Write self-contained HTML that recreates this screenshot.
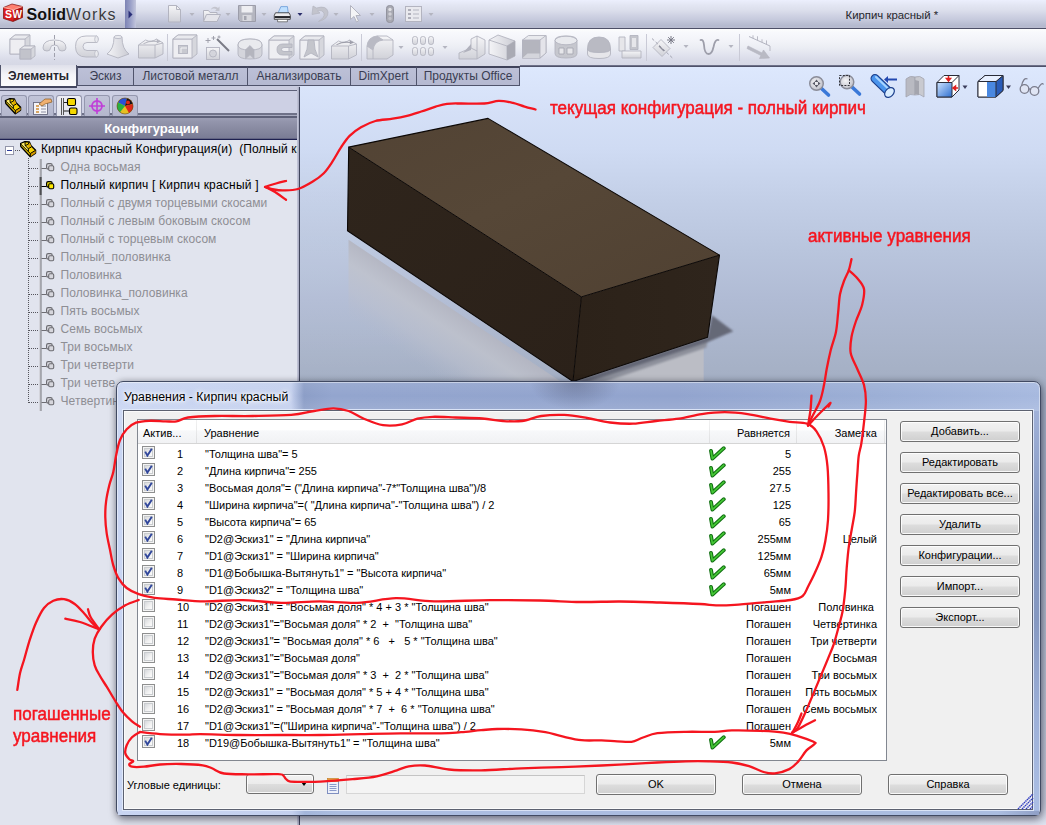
<!DOCTYPE html>
<html lang="ru">
<head>
<meta charset="utf-8">
<title>Уравнения - Кирпич красный</title>
<style>
*{box-sizing:border-box;margin:0;padding:0}
html,body{width:1046px;height:825px;overflow:hidden;background:#dfe2f0}
body{position:relative;font-family:"Liberation Sans",sans-serif;font-size:11px;color:#000}
.abs{position:absolute}
#titlebar{left:0;top:0;width:1046px;height:28px;background:linear-gradient(#eceffd 0,#e3e6f3 18%,#dcdfec 36%,#d0d3e4 54%,#c5c9dc 71%,#b4b9ce 92%,#b9bccf 100%)}
#logo{left:0;top:0;width:125px;height:28px;background:linear-gradient(#eef0fc 0,#e6e8f3 18%,#dfe1ed 36%,#d3d6e5 54%,#c8cbdd 71%,#b7bbcf 92%,#bbbed0 100%)}
#logotab{left:125px;top:0;width:11px;height:28px;background:linear-gradient(90deg,#7d83b4,#9aa0c8 50%,#c3c6dc)}
#tbline{left:0;top:28px;width:1046px;height:1px;background:#4c4f66}
#toolbar{left:0;top:29px;width:1046px;height:37px;background:linear-gradient(#fdfdfd 0,#f7f8fc 11%,#f3f4f9 30%,#eceef4 49%,#e2e4ef 68%,#d9dbe8 84%,#d6d8e5 100%)}
#tabrow{left:0;top:66px;width:1046px;height:21px;background:#c9cbdf}
.tab{position:absolute;top:66px;height:20px;background:linear-gradient(#bcc0d7,#b5b9d1);border:1px solid #50546c;border-top:2px solid #3f425a;font-size:12px;color:#3a3d52;text-align:center;line-height:16px;white-space:nowrap}
.tab.act{top:65px;height:22px;background:linear-gradient(#dfe0ea,#f4f4f8 45%,#fdfdfe);border:none;border-left:1px solid #50546c;border-right:1px solid #50546c;font-weight:bold;color:#26262e;line-height:22px}
#leftpanel{left:0;top:87px;width:297px;height:738px;background:#e1e4ee}
#lpband{left:0;top:87px;width:297px;height:29px;background:linear-gradient(#c8cade 0,#c8cade 2.5px,#5f627a 2.5px,#5f627a 3.5px,#cdd0e4 3.5px,#cdd0e4 26.5px,#6e7188 26.5px,#6e7188 28px,#a8abc0 28px)}
#lpsplit{left:297px;top:87px;width:3px;height:738px;background:linear-gradient(90deg,#c8cadc 0,#a9acc2 1.7px,#3f445c 1.8px)}
.itab{position:absolute;top:95px;width:26px;height:21px;background:linear-gradient(#c1c4d8,#b4b7cd);border:1px solid #9497ae;border-bottom:none;border-radius:3px 3px 0 0}
.itab.act{background:linear-gradient(#eeeef5,#e2e3ed)}
#cfghead{left:0;top:116px;width:297px;height:24px;background:linear-gradient(#5d6078 0,#5d6078 1.5px,#9c9eb4 2px,#9294ab 25%,#86889f 60%,#7a7c95 93%,#1e2050 96%);color:#fff;font-weight:bold;font-size:13px;text-align:center;line-height:25px;padding-left:6px}
#viewport{left:300px;top:87px;width:746px;height:738px;background:#e6e9f5}
.tree{position:absolute;left:60.5px;font-size:12px;letter-spacing:.06px;color:#8e8e94;white-space:nowrap;line-height:18px;height:18px}
.tree.on{color:#000}

.tl{position:absolute;background-image:linear-gradient(#55555c 50%,transparent 50%);background-size:1px 2px;width:1px}
.th{position:absolute;height:1px;background-image:linear-gradient(90deg,#55555c 50%,transparent 50%);background-size:2px 1px}
.ci{position:absolute;left:39px}

#scene{left:300px;top:66px}

#ico{left:0;top:0;pointer-events:none}
#swS{left:26.5px;top:4.5px;font:bold 16px "Liberation Sans",sans-serif;color:#111;letter-spacing:.1px;white-space:nowrap;line-height:20px;text-shadow:0 1px 0 rgba(255,255,255,.6)}
#swS b{font-weight:normal;color:#3a3a3e;letter-spacing:1.1px}

#dlg{left:116px;top:381px;width:925px;height:435px;border-radius:7px 7px 6px 6px;border:1px solid #414a62;background:radial-gradient(ellipse 45px 28px at 458px 0,rgba(40,40,60,.28),rgba(40,40,60,0)),linear-gradient(rgba(255,255,255,.08),rgba(255,255,255,0) 14px,rgba(255,255,255,.1) 28px,rgba(255,255,255,0) 60px),linear-gradient(90deg,#c9d5f2 0,#c4d0ee 174px,#8c9ec7 187px,#93a5ce 215px,#92a4ce 560px,#9cafd6 760px,#a7b9df 100%);box-shadow:0 0 0 1px rgba(255,255,255,.45) inset,1px 4px 9px rgba(0,0,20,.38),0 0 6px rgba(0,0,20,.25)}
#dlgtitle{left:124px;top:390px;font-size:12.3px;color:#000;white-space:nowrap;text-shadow:0 0 6px #fff,0 0 6px #fff,0 0 3px #fff}
#dlgclient{left:123px;top:410px;width:910px;height:400px;background:#f0f0f0;border:1px solid #5c6170;box-shadow:0 0 0 1px rgba(228,236,252,.85),inset 0 0 0 1px rgba(255,255,255,.7)}
#list{left:137px;top:419px;width:750px;height:342px;background:#fff;border:1px solid #828790}
#lhead{left:138px;top:420px;width:748px;height:24px;background:linear-gradient(#fff,#fff 45%,#f7f8fa 46%,#f1f2f4);border-bottom:1px solid #d5d5d5}
.hsep{position:absolute;top:420px;width:1px;height:23px;background:linear-gradient(#f2f2f2,#dedfe1)}
.htx{position:absolute;top:421px;height:23px;line-height:24px;white-space:nowrap;color:#000}
.r{position:absolute;left:138px;width:748px;height:17px;line-height:17px;white-space:pre}
.r span{position:absolute;top:2px}
.r .n{left:39px}
.r .e{left:67px}
.r .v{right:95px;text-align:right}
.r .m{right:9px;text-align:right}
.cb{position:absolute;left:4px;top:2px;width:13px;height:13px;border:1px solid #8e8f8f;background:#f4f4f4}
.cb i{position:absolute;left:1px;top:1px;width:9px;height:9px;border:1px solid #c9cccf;background:linear-gradient(135deg,#d6d8db,#f2f2f2 60%,#fbfbfb)}
.cb svg{position:absolute;left:1px;top:1px}
.ck{position:absolute;left:571px;top:1.6px}
.btn{position:absolute;height:21px;border:1px solid #707070;border-radius:3px;background:linear-gradient(#f2f2f2,#ebebeb 48%,#dddddd 52%,#cfcfcf);box-shadow:inset 0 0 0 1px rgba(255,255,255,.85);text-align:center;line-height:19px;white-space:nowrap;color:#000}

#annot{left:0;top:0;pointer-events:none}
.rt{position:absolute;font:18px "Liberation Sans",sans-serif;color:#f5151f;-webkit-text-stroke:.5px #f5151f;white-space:nowrap;transform-origin:0 0;transform:scaleX(.946);line-height:22px}

</style>
</head>
<body>
<!-- ======= main window chrome ======= -->
<div id="titlebar" class="abs"></div>
<div id="logo" class="abs"></div>
<div id="logotab" class="abs"></div>
<div id="tbline" class="abs"></div>
<div id="toolbar" class="abs"></div>
<div id="tabrow" class="abs"></div>
<svg id="scene" class="abs" width="746" height="759" viewBox="0 0 746 759">
<defs>
<linearGradient id="bgv" x1="0" y1="0" x2="0" y2="1">
<stop offset="0" stop-color="#dde8fd"/><stop offset=".06" stop-color="#d5e0f7"/><stop offset=".11" stop-color="#cfdbf3"/><stop offset=".176" stop-color="#c3cfe7"/><stop offset=".242" stop-color="#b9c5dd"/><stop offset=".308" stop-color="#b0bbd4"/><stop offset=".398" stop-color="#a6b1c6"/><stop offset=".415" stop-color="#a4afc4"/><stop offset=".55" stop-color="#a4afc4"/><stop offset=".97" stop-color="#c4c9da"/><stop offset="1" stop-color="#dfe3f0"/>
</linearGradient>
<radialGradient id="bgh" gradientUnits="userSpaceOnUse" cx="0" cy="0" r="1" gradientTransform="translate(0,205) scale(470,135)">
<stop offset="0" stop-color="#fff" stop-opacity=".06"/><stop offset=".45" stop-color="#fff" stop-opacity=".04"/><stop offset=".8" stop-color="#fff" stop-opacity=".01"/><stop offset="1" stop-color="#fff" stop-opacity="0"/>
</radialGradient>
<linearGradient id="topf" x1="0" y1="0" x2="1" y2="1">
<stop offset="0" stop-color="#524334"/><stop offset=".45" stop-color="#564737"/><stop offset="1" stop-color="#504132"/>
</linearGradient>
<linearGradient id="leftf" x1="0" y1="0" x2="1" y2="1">
<stop offset="0" stop-color="#2f251c"/><stop offset="1" stop-color="#2b2119"/>
</linearGradient>
<linearGradient id="rightf" x1="0" y1="0" x2="1" y2="0">
<stop offset="0" stop-color="#2c2219"/><stop offset="1" stop-color="#2f251c"/>
</linearGradient>
<linearGradient id="refl" x1="0" y1="0" x2="0" y2="1">
<stop offset="0" stop-color="#b4b6c2" stop-opacity=".95"/><stop offset=".3" stop-color="#bfc2cc" stop-opacity=".85"/><stop offset=".65" stop-color="#bcc0cd" stop-opacity=".55"/><stop offset="1" stop-color="#b4bacb" stop-opacity="0"/>
</linearGradient>
<filter id="blur3" x="-20%" y="-20%" width="140%" height="140%"><feGaussianBlur stdDeviation="2.2"/></filter>
<filter id="blur1" x="-20%" y="-20%" width="140%" height="140%"><feGaussianBlur stdDeviation="1"/></filter>
</defs>
<rect width="746" height="759" fill="url(#bgv)"/>
<rect width="746" height="400" fill="url(#bgh)"/>
<g transform="translate(48.5,173.8) skewY(33.75)"><rect width="224.5" height="78" fill="url(#refl)"/></g>
<polygon points="273.0,321.5 403.7,277.5 403.7,334.0 273.0,334.0" fill="#bdbec4" opacity=".92"/>
<polygon points="407.6,271.2 406.5,281.5 274.0,326.0 273.0,315.5" fill="#8d909b" filter="url(#blur1)"/>
<polygon points="412.0,249.3 433.3,265.2 408.0,276.0 360.0,292.0 274.0,320.5 273.0,315.5 407.6,271.2" fill="#626573" opacity=".95" filter="url(#blur1)"/>
<polygon points="48.7,81.1 188.0,52.4 419.5,189.1 281.4,230.9" fill="url(#topf)"/>
<polygon points="48.7,81.1 281.4,230.9 273.0,315.5 47.5,164.8" fill="url(#leftf)"/>
<polygon points="281.4,230.9 419.5,189.1 407.6,271.2 273.0,315.5" fill="url(#rightf)"/>
<polygon points="48.7,81.1 188.0,52.4 419.5,189.1 407.6,271.2 273.0,315.5 47.5,164.8" fill="none" stroke="#0c0806" stroke-width="1.1" stroke-linejoin="round"/>
<polyline points="48.7,81.1 281.4,230.9 419.5,189.1" fill="none" stroke="#0c0806" stroke-width="1"/>
<polyline points="281.4,230.9 273.0,315.5" fill="none" stroke="#0c0806" stroke-width="1"/>
</svg>
<div class="tab act" style="left:0;width:77px">Элементы</div>
<div class="abs" style="left:0;top:86px;width:77px;height:2px;background:#444760;z-index:1"></div>
<div class="abs" style="left:520px;top:65px;width:526px;height:2px;background:linear-gradient(#7d8098,#3f425a)"></div>
<div class="tab" style="left:77px;width:57px">Эскиз</div>
<div class="tab" style="left:133px;width:115px">Листовой металл</div>
<div class="tab" style="left:247px;width:104px">Анализировать</div>
<div class="tab" style="left:350px;width:67px">DimXpert</div>
<div class="tab" style="left:416px;width:104px">Продукты Office</div>
<div class="abs" style="left:845.5px;top:8.5px;font-size:11.4px;color:#26262c;white-space:nowrap">Кирпич красный *</div>

<!-- ======= left panel ======= -->
<div id="leftpanel" class="abs"></div>
<div id="lpband" class="abs"></div>
<div class="itab" style="left:1px"></div>
<div class="itab" style="left:28px"></div>
<div class="itab act" style="left:56px;height:22px"></div>
<div class="itab" style="left:84px"></div>
<div class="itab" style="left:112px"></div>
<div id="cfghead" class="abs">Конфигурации</div>
<div id="lpsplit" class="abs"></div>

<!-- ======= viewport ======= -->

<div class="abs" style="left:5px;top:146px;width:9px;height:9px;border:1px solid #9396aa;background:#fff"></div><div class="abs" style="left:7px;top:150px;width:5px;height:1px;background:#2a3a9a"></div>
<div class="th" style="left:15px;top:150px;width:6px"></div>
<svg class="abs" style="left:20px;top:141px" width="18" height="17" viewBox="0 0 18 17"><path d="M0.4 2.700 L4.900 0.600 L9.400 1 L11.100 4.700 L15.600 9.300 L15.600 12.100 L10.300 15.800 L0.800 5.500 Z" fill="#f6d200" stroke="#000" stroke-width="1.300" stroke-linejoin="round"/><path d="M10.300 12.500 L15.600 9.300 L15.600 12.100 L10.300 15.800Z" fill="#d49a00"/><path d="M8.300 7.600 L11.200 6 L11.100 4.700 L9.400 1 L8.200 3.500Z" fill="#dca800"/><path d="M1 3 L4.900 1.200 L5.200 4.600 L8.200 7.700 L8.300 10.400 Z" fill="#ffee70"/><path d="M0.400 2.700 L10.300 12.500 L15.600 9.300 M10.300 12.500 V15.800 M4.900 0.600 L5.200 4.600 L8.300 7.700 L11.200 6.100 M8.300 7.700 V10.400 M5.200 4.600 L8.200 3.300 L9.400 1" fill="none" stroke="#000" stroke-width="1"/></svg>
<div class="tree on" style="letter-spacing:.1px;left:41px;top:140px;width:256px;overflow:hidden">Кирпич красный Конфигурация(и)&nbsp; (Полный кирпич )</div>
<div class="tl" style="left:28px;top:158px;height:245px"></div>
<div class="th" style="left:29px;top:168px;width:10px"></div>
<svg class="ci" style="top:159px" width="16" height="18" viewBox="0 0 16 18"><path d="M1 0v18" stroke="#c4c4c8" stroke-width="1"/><path d="M2 0v18" stroke="#77777c" stroke-width="1"/><path d="M2.500 9.500h5" stroke="#6c6c72" stroke-width="1"/><rect x="7.600" y="4.600" width="5.600" height="5.600" rx="1.600" fill="#e0e0e6" stroke="#6c6c72" stroke-width="1.200"/><rect x="9.700" y="6.800" width="5" height="5" rx="1.200" fill="#d6d6dc" stroke="#6c6c72" stroke-width="1.100"/></svg>
<div class="tree" style="top:158px">Одна восьмая</div>
<div class="th" style="left:29px;top:186px;width:10px"></div>
<svg class="ci" style="top:177px" width="16" height="18" viewBox="0 0 16 18"><path d="M1 0v18" stroke="#555" stroke-width="1"/><path d="M2 0v18" stroke="#000" stroke-width="1"/><path d="M2.500 9.500h5" stroke="#000" stroke-width="1"/><rect x="7.600" y="4.600" width="5.600" height="5.600" rx="1.600" fill="#e8d800" stroke="#000" stroke-width="1.200"/><rect x="9.700" y="6.800" width="5" height="5" rx="1.200" fill="#ffe800" stroke="#000" stroke-width="1.100"/></svg>
<div class="tree on" style="top:176px;letter-spacing:.2px">Полный кирпич [ Кирпич красный ]</div>
<div class="th" style="left:29px;top:204px;width:10px"></div>
<svg class="ci" style="top:195px" width="16" height="18" viewBox="0 0 16 18"><path d="M1 0v18" stroke="#c4c4c8" stroke-width="1"/><path d="M2 0v18" stroke="#77777c" stroke-width="1"/><path d="M2.500 9.500h5" stroke="#6c6c72" stroke-width="1"/><rect x="7.600" y="4.600" width="5.600" height="5.600" rx="1.600" fill="#e0e0e6" stroke="#6c6c72" stroke-width="1.200"/><rect x="9.700" y="6.800" width="5" height="5" rx="1.200" fill="#d6d6dc" stroke="#6c6c72" stroke-width="1.100"/></svg>
<div class="tree" style="top:194px">Полный с двумя торцевыми скосами</div>
<div class="th" style="left:29px;top:222px;width:10px"></div>
<svg class="ci" style="top:213px" width="16" height="18" viewBox="0 0 16 18"><path d="M1 0v18" stroke="#c4c4c8" stroke-width="1"/><path d="M2 0v18" stroke="#77777c" stroke-width="1"/><path d="M2.500 9.500h5" stroke="#6c6c72" stroke-width="1"/><rect x="7.600" y="4.600" width="5.600" height="5.600" rx="1.600" fill="#e0e0e6" stroke="#6c6c72" stroke-width="1.200"/><rect x="9.700" y="6.800" width="5" height="5" rx="1.200" fill="#d6d6dc" stroke="#6c6c72" stroke-width="1.100"/></svg>
<div class="tree" style="top:212px">Полный с левым боковым скосом</div>
<div class="th" style="left:29px;top:240px;width:10px"></div>
<svg class="ci" style="top:231px" width="16" height="18" viewBox="0 0 16 18"><path d="M1 0v18" stroke="#c4c4c8" stroke-width="1"/><path d="M2 0v18" stroke="#77777c" stroke-width="1"/><path d="M2.500 9.500h5" stroke="#6c6c72" stroke-width="1"/><rect x="7.600" y="4.600" width="5.600" height="5.600" rx="1.600" fill="#e0e0e6" stroke="#6c6c72" stroke-width="1.200"/><rect x="9.700" y="6.800" width="5" height="5" rx="1.200" fill="#d6d6dc" stroke="#6c6c72" stroke-width="1.100"/></svg>
<div class="tree" style="top:230px">Полный с торцевым скосом</div>
<div class="th" style="left:29px;top:258px;width:10px"></div>
<svg class="ci" style="top:249px" width="16" height="18" viewBox="0 0 16 18"><path d="M1 0v18" stroke="#c4c4c8" stroke-width="1"/><path d="M2 0v18" stroke="#77777c" stroke-width="1"/><path d="M2.500 9.500h5" stroke="#6c6c72" stroke-width="1"/><rect x="7.600" y="4.600" width="5.600" height="5.600" rx="1.600" fill="#e0e0e6" stroke="#6c6c72" stroke-width="1.200"/><rect x="9.700" y="6.800" width="5" height="5" rx="1.200" fill="#d6d6dc" stroke="#6c6c72" stroke-width="1.100"/></svg>
<div class="tree" style="top:248px">Полный_половинка</div>
<div class="th" style="left:29px;top:276px;width:10px"></div>
<svg class="ci" style="top:267px" width="16" height="18" viewBox="0 0 16 18"><path d="M1 0v18" stroke="#c4c4c8" stroke-width="1"/><path d="M2 0v18" stroke="#77777c" stroke-width="1"/><path d="M2.500 9.500h5" stroke="#6c6c72" stroke-width="1"/><rect x="7.600" y="4.600" width="5.600" height="5.600" rx="1.600" fill="#e0e0e6" stroke="#6c6c72" stroke-width="1.200"/><rect x="9.700" y="6.800" width="5" height="5" rx="1.200" fill="#d6d6dc" stroke="#6c6c72" stroke-width="1.100"/></svg>
<div class="tree" style="top:266px">Половинка</div>
<div class="th" style="left:29px;top:294px;width:10px"></div>
<svg class="ci" style="top:285px" width="16" height="18" viewBox="0 0 16 18"><path d="M1 0v18" stroke="#c4c4c8" stroke-width="1"/><path d="M2 0v18" stroke="#77777c" stroke-width="1"/><path d="M2.500 9.500h5" stroke="#6c6c72" stroke-width="1"/><rect x="7.600" y="4.600" width="5.600" height="5.600" rx="1.600" fill="#e0e0e6" stroke="#6c6c72" stroke-width="1.200"/><rect x="9.700" y="6.800" width="5" height="5" rx="1.200" fill="#d6d6dc" stroke="#6c6c72" stroke-width="1.100"/></svg>
<div class="tree" style="top:284px">Половинка_половинка</div>
<div class="th" style="left:29px;top:312px;width:10px"></div>
<svg class="ci" style="top:303px" width="16" height="18" viewBox="0 0 16 18"><path d="M1 0v18" stroke="#c4c4c8" stroke-width="1"/><path d="M2 0v18" stroke="#77777c" stroke-width="1"/><path d="M2.500 9.500h5" stroke="#6c6c72" stroke-width="1"/><rect x="7.600" y="4.600" width="5.600" height="5.600" rx="1.600" fill="#e0e0e6" stroke="#6c6c72" stroke-width="1.200"/><rect x="9.700" y="6.800" width="5" height="5" rx="1.200" fill="#d6d6dc" stroke="#6c6c72" stroke-width="1.100"/></svg>
<div class="tree" style="top:302px">Пять восьмых</div>
<div class="th" style="left:29px;top:330px;width:10px"></div>
<svg class="ci" style="top:321px" width="16" height="18" viewBox="0 0 16 18"><path d="M1 0v18" stroke="#c4c4c8" stroke-width="1"/><path d="M2 0v18" stroke="#77777c" stroke-width="1"/><path d="M2.500 9.500h5" stroke="#6c6c72" stroke-width="1"/><rect x="7.600" y="4.600" width="5.600" height="5.600" rx="1.600" fill="#e0e0e6" stroke="#6c6c72" stroke-width="1.200"/><rect x="9.700" y="6.800" width="5" height="5" rx="1.200" fill="#d6d6dc" stroke="#6c6c72" stroke-width="1.100"/></svg>
<div class="tree" style="top:320px">Семь восьмых</div>
<div class="th" style="left:29px;top:348px;width:10px"></div>
<svg class="ci" style="top:339px" width="16" height="18" viewBox="0 0 16 18"><path d="M1 0v18" stroke="#c4c4c8" stroke-width="1"/><path d="M2 0v18" stroke="#77777c" stroke-width="1"/><path d="M2.500 9.500h5" stroke="#6c6c72" stroke-width="1"/><rect x="7.600" y="4.600" width="5.600" height="5.600" rx="1.600" fill="#e0e0e6" stroke="#6c6c72" stroke-width="1.200"/><rect x="9.700" y="6.800" width="5" height="5" rx="1.200" fill="#d6d6dc" stroke="#6c6c72" stroke-width="1.100"/></svg>
<div class="tree" style="top:338px">Три восьмых</div>
<div class="th" style="left:29px;top:366px;width:10px"></div>
<svg class="ci" style="top:357px" width="16" height="18" viewBox="0 0 16 18"><path d="M1 0v18" stroke="#c4c4c8" stroke-width="1"/><path d="M2 0v18" stroke="#77777c" stroke-width="1"/><path d="M2.500 9.500h5" stroke="#6c6c72" stroke-width="1"/><rect x="7.600" y="4.600" width="5.600" height="5.600" rx="1.600" fill="#e0e0e6" stroke="#6c6c72" stroke-width="1.200"/><rect x="9.700" y="6.800" width="5" height="5" rx="1.200" fill="#d6d6dc" stroke="#6c6c72" stroke-width="1.100"/></svg>
<div class="tree" style="top:356px">Три четверти</div>
<div class="th" style="left:29px;top:384px;width:10px"></div>
<svg class="ci" style="top:375px" width="16" height="18" viewBox="0 0 16 18"><path d="M1 0v18" stroke="#c4c4c8" stroke-width="1"/><path d="M2 0v18" stroke="#77777c" stroke-width="1"/><path d="M2.500 9.500h5" stroke="#6c6c72" stroke-width="1"/><rect x="7.600" y="4.600" width="5.600" height="5.600" rx="1.600" fill="#e0e0e6" stroke="#6c6c72" stroke-width="1.200"/><rect x="9.700" y="6.800" width="5" height="5" rx="1.200" fill="#d6d6dc" stroke="#6c6c72" stroke-width="1.100"/></svg>
<div class="tree" style="top:374px">Три четве</div>
<div class="th" style="left:29px;top:402px;width:10px"></div>
<svg class="ci" style="top:393px" width="16" height="18" viewBox="0 0 16 18"><path d="M1 0v18" stroke="#c4c4c8" stroke-width="1"/><path d="M2 0v18" stroke="#77777c" stroke-width="1"/><path d="M2.500 9.500h5" stroke="#6c6c72" stroke-width="1"/><rect x="7.600" y="4.600" width="5.600" height="5.600" rx="1.600" fill="#e0e0e6" stroke="#6c6c72" stroke-width="1.200"/><rect x="9.700" y="6.800" width="5" height="5" rx="1.200" fill="#d6d6dc" stroke="#6c6c72" stroke-width="1.100"/></svg>
<div class="tree" style="top:392px">Четвертинка</div>
<svg id="ico" class="abs" width="1046" height="120" viewBox="0 0 1046 120">
<defs>
<linearGradient id="gcube" x1="0" y1="0" x2="1" y2="1"><stop offset="0" stop-color="#ff6a5a"/><stop offset=".5" stop-color="#e02020"/><stop offset="1" stop-color="#9a0c0c"/></linearGradient>
<linearGradient id="ggrey" x1="0" y1="0" x2="0" y2="1"><stop offset="0" stop-color="#f6f6f8"/><stop offset="1" stop-color="#d0d1d8"/></linearGradient>
<linearGradient id="ggrey2" x1="0" y1="0" x2="1" y2="0"><stop offset="0" stop-color="#f4f4f7"/><stop offset="1" stop-color="#cbccd4"/></linearGradient>
<linearGradient id="gblue" x1="0" y1="0" x2="1" y2="1"><stop offset="0" stop-color="#cfe4ff"/><stop offset="1" stop-color="#2d6fd0"/></linearGradient>
<radialGradient id="glens" cx=".4" cy=".4" r=".7"><stop offset="0" stop-color="#f4f4f6"/><stop offset="1" stop-color="#b9bac4"/></radialGradient>
</defs>
<g><path d="M3.500 7.500 L12 4 L22.500 6.500 L13.500 9.800Z" fill="#ff8070"/><path d="M3.500 7.500 L13.500 9.800 L13 21.500 L3.500 18.500Z" fill="#dc1c1c"/><path d="M13.500 9.800 L22.500 6.500 L22.500 17.500 L13 21.500Z" fill="#b41212"/><path d="M3.500 7.500 L12 4 L22.500 6.500 L22.500 17.500 L13 21.500 L3.500 18.500Z" fill="none" stroke="#7a0c0c" stroke-width=".7"/><path d="M3.500 7.500 L13.500 9.800 L22.500 6.500" fill="none" stroke="#ffc0b0" stroke-width=".8"/></g>
<text x="5" y="18.400" font-family="Liberation Sans, sans-serif" font-weight="bold" font-size="10.500" fill="#fff">S</text><text x="12.600" y="17.800" font-family="Liberation Sans, sans-serif" font-weight="bold" font-size="10.500" fill="#fff" textLength="9.500" lengthAdjust="spacingAndGlyphs">W</text>
<path d="M128.5 10.5 L132.5 14.5 L128.5 18.5 Z" fill="#2a2f78"/>
<path d="M168.5 5.5 h8 l4 4 v12.5 h-12 z" fill="url(#ggrey)" stroke="#b3b4c0"/><path d="M176.5 5.5 v4 h4" fill="none" stroke="#b3b4c0"/>
<path d="M189.5 13h5l-2.5 3z" fill="#b4b5c0"/>
<path d="M203.5 21.5 v-11 h5 l1.5 2 h7 v9 z" fill="url(#ggrey)" stroke="#b3b4c0"/><path d="M203.5 21.5 l3 -7 h14 l-3.5 7 z" fill="#e4e4ea" stroke="#b3b4c0"/><path d="M211 9 q3 -4 7 -1 l1.5 -1.5 v4.5 h-4.5 l1.5 -1.5 q-2.5 -2 -5.500 0z" fill="#c3c4cd"/>
<path d="M225.5 13h5l-2.5 3z" fill="#b4b5c0"/>
<path d="M238.500 5.5 h17 v16 h-15 l-2 -2 z" fill="#b5b6c0" stroke="#9c9daa"/><rect x="241.500" y="6" width="11" height="6.5" fill="#eeeef2"/><rect x="242.500" y="15" width="9" height="6" fill="#d8d8de"/><rect x="244" y="16" width="2.5" height="4" fill="#a4a5b0"/>
<path d="M261.5 13h5l-2.5 3z" fill="#b4b5c0"/>
<g transform="translate(282.500,14) scale(.82) translate(-282.500,-14)"><path d="M277 13 l3.500 -8 h8 l1 8z" fill="#bfe0ff" stroke="#5f93d4" stroke-width=".9"/><path d="M274 12.500 h16.500 l1.500 3 v5 h-19.500 v-5z" fill="#ececee" stroke="#333" stroke-width="1"/><path d="M273 16.500 h19 v2.500 h-19z" fill="#26262a"/><path d="M276.500 20.500 h12 v3 h-12z" fill="#fff" stroke="#444" stroke-width=".8"/></g>
<path d="M297.5 13h5l-2.5 3z" fill="#2a2d6a"/>
<path d="M313 6 l-1 8.500 l8 -1.500 l-2.500 -2 q5 -1.500 6.500 2.500 q1 4 -5.500 8 q10 -2.500 9.500 -9.500 q-1.500 -7 -11.500 -4z" fill="#c3c4cd" stroke="#b3b4c0" stroke-width=".7"/>
<path d="M333.5 13h5l-2.5 3z" fill="#b4b5c0"/>
<path d="M350.500 5.500 v14 l3.500 -3 l2.500 5.500 l2 -1 l-2.500 -5.500 h4.500z" fill="#f4f4f6" stroke="#b3b4c0"/>
<path d="M369.5 13h5l-2.5 3z" fill="#b4b5c0"/>
<rect x="386.500" y="5.500" width="7" height="17" rx="3" fill="#a8a9b2" stroke="#92939e"/><circle cx="390" cy="9.500" r="1.700" fill="#e0e0e4"/><circle cx="390" cy="14" r="1.700" fill="#d0d0d6"/><circle cx="390" cy="18.500" r="1.700" fill="#c0c0c8"/>
<rect x="405.500" y="6.500" width="16" height="15" fill="#e9e9ee" stroke="#b3b4c0"/><path d="M408 10h3M408 14h3M408 18h3" stroke="#9a9ba8" stroke-width="1.600"/><path d="M413 10h6M413 14h6M413 18h6" stroke="#b4b5c0" stroke-width="1"/>
<path d="M428.5 13h5l-2.5 3z" fill="#b4b5c0"/>
<path d="M10 39 l5 -4 h15 v15 l-5 4 h-15 z" fill="#d6d7dd" stroke="#b3b4c0" stroke-width=".9"/><rect x="10" y="39" width="15" height="15" fill="#eeeef2" stroke="#b3b4c0" stroke-width=".9"/><path d="M10 39 l5 -4 h15 l-5 4z" fill="#e9eaee" stroke="#b3b4c0" stroke-width=".9"/>
<path d="M20 49 l4 -3 h11 v10 l-4 3 h-11 z" fill="#d6d7dd" stroke="#b3b4c0" stroke-width=".9"/><rect x="20" y="49" width="11" height="10" fill="#c2c3cb" stroke="#b3b4c0" stroke-width=".9"/><path d="M20 49 l4 -3 h11 l-4 3z" fill="#e9eaee" stroke="#b3b4c0" stroke-width=".9"/>
<path d="M43 48 q0 -8 11.500 -8 q11.500 0 11.500 8 q0 3 -4 3 q-3.500 0 -3.500 -3 q0 -3 -4 -3 q-4 0 -4 3 q0 3 -3.500 3 q-4 0 -4 -3z" fill="url(#ggrey)" stroke="#b3b4c0" stroke-width=".9"/><path d="M54.500 35 v25" stroke="#9fa0ac" stroke-width="1" stroke-dasharray="4 2"/>
<path d="M97 36 h-11 q-10.500 0 -10.500 10.500 q0 10.500 10.500 10.500 h11 q2.500 -3 0 -6.500 h-10 q-4 0 -4 -4 q0 -4 4 -4 h10 q2.500 -3.500 0 -6.500z" fill="url(#ggrey)" stroke="#b3b4c0" stroke-width=".9"/><ellipse cx="96.500" cy="39.300" rx="1.800" ry="3.200" fill="#e9eaee" stroke="#b3b4c0" stroke-width=".7"/><ellipse cx="96.500" cy="53.700" rx="1.800" ry="3.200" fill="#e9eaee" stroke="#b3b4c0" stroke-width=".7"/>
<path d="M114 37 q0 12 -7 17 l11 4 l11 -4 q-7 -5 -7 -17z" fill="url(#ggrey2)" stroke="#b3b4c0" stroke-width=".9"/><ellipse cx="118" cy="37" rx="4" ry="1.600" fill="#e9eaee" stroke="#b3b4c0" stroke-width=".8"/>
<path d="M138.500 45 l7 -5 q6 3 11 -1 l6.500 4 v11 l-8 4 h-16.500z" fill="url(#ggrey)" stroke="#b3b4c0" stroke-width=".9"/><path d="M138.500 45 h16.500 l8 -2 M155 45 v13" fill="none" stroke="#b3b4c0" stroke-width=".9"/><path d="M143 43.500 q7 -4 14 -2.500 l-1 -2 l5 2.500 l-4.500 2 l.5 -1.500 q-7 -1 -13 2z" fill="#b5b6c0"/>
<path d="M167.500 34 v27" stroke="#c9cad6" stroke-width="1"/>
<path d="M173 39 l5 -4 h19 v19 l-5 4 h-19 z" fill="#d6d7dd" stroke="#b3b4c0" stroke-width=".9"/><rect x="173" y="39" width="19" height="19" fill="#eeeef2" stroke="#b3b4c0" stroke-width=".9"/><path d="M173 39 l5 -4 h19 l-5 4z" fill="#e9eaee" stroke="#b3b4c0" stroke-width=".9"/>
<rect x="178.500" y="45.500" width="9" height="8" fill="#c8c9d0" stroke="#b3b4c0" stroke-width=".9"/><path d="M181 53 v-5 h6" fill="none" stroke="#f4f4f6" stroke-width="1"/>
<rect x="206.500" y="47.500" width="13" height="12" fill="url(#ggrey)" stroke="#b3b4c0" stroke-width=".9"/><circle cx="213" cy="53.500" r="3.500" fill="#d4d5dc" stroke="#b3b4c0" stroke-width=".9"/><path d="M217 39 l12 12" stroke="#7a7b86" stroke-width="2"/><path d="M208 38 v5 M205.500 40.500 h5 M213.500 36 v4 M211.500 38 h4 M219 35.500 v3 M217.500 37 h3" stroke="#9a9ba6" stroke-width=".9"/>
<path d="M238 45 q0 -6 12 -6 q12 0 12 6 v9 q0 5 -12 5 q-12 0 -12 -5z" fill="#d4d5dc" stroke="#b3b4c0" stroke-width=".9"/><path d="M238 45 q0 -6 12 -6 q12 0 12 6 q0 5 -12 5 q-12 0 -12 -5z" fill="#e9eaee" stroke="#b3b4c0" stroke-width=".9"/><path d="M250 45.500 l-4.500 4.300 v9 l4.500 -4 l4 4 v-9z" fill="#b4b5be" stroke="#b3b4c0" stroke-width=".7"/>
<path d="M269 40 l5 -4 h20 v19 l-5 4 h-20 z" fill="#d6d7dd" stroke="#b3b4c0" stroke-width=".9"/><rect x="269" y="40" width="20" height="19" fill="#eeeef2" stroke="#b3b4c0" stroke-width=".9"/><path d="M269 40 l5 -4 h20 l-5 4z" fill="#e9eaee" stroke="#b3b4c0" stroke-width=".9"/>
<path d="M292 44 h-9 q-6 0 -6 5.500 q0 5.500 6 5.500 h9 v-3.500 h-8 q-2.500 0 -2.500 -2 q0 -2 2.500 -2 h8z" fill="#c4c5cc" stroke="#b3b4c0" stroke-width=".9"/>
<path d="M300 40 l5 -4 h19 v19 l-5 4 h-19 z" fill="#d6d7dd" stroke="#b3b4c0" stroke-width=".9"/><rect x="300" y="40" width="19" height="19" fill="#eeeef2" stroke="#b3b4c0" stroke-width=".9"/><path d="M300 40 l5 -4 h19 l-5 4z" fill="#e9eaee" stroke="#b3b4c0" stroke-width=".9"/>
<path d="M308 40 q0 10 -4 17 l7 -4 l7 4 q-4 -7 -4 -17z" fill="#c4c5cc" stroke="#b3b4c0" stroke-width=".9"/>
<path d="M331.500 46 l7 -5 q6 3 11 -1 l7 4 v11 l-8 4 h-17z" fill="url(#ggrey)" stroke="#b3b4c0" stroke-width=".9"/><path d="M331.500 46 h17 l8 -2 M348.500 46 v13" fill="none" stroke="#b3b4c0" stroke-width=".9"/><path d="M336 44.500 q7 -4 14 -2.500 l-1 -2 l5 2.500 l-4.500 2 l.5 -1.500 q-7 -1 -13 2z" fill="#9d9eaa"/>
<path d="M361.500 34 v27" stroke="#c9cad6" stroke-width="1"/>
<path d="M367 46 q1 -9 10 -10 h10 l6 4 v15 l-6 4 h-20z" fill="url(#ggrey)" stroke="#b3b4c0" stroke-width=".9"/><path d="M367 46 l6 4 q1 -9 10 -10 l-6 -4 M373 50 v9 M383 40 h10" fill="none" stroke="#b3b4c0" stroke-width=".9"/><path d="M367 46 q1 -9 10 -10 l6 4 q-9 1 -10 10z" fill="#b9bac4"/>
<path d="M398.5 46h5l-2.5 3z" fill="#b4b5c0"/>
<rect x="412.5" y="36.5" width="5" height="8" rx="2.200" fill="url(#ggrey)" stroke="#b3b4c0" stroke-width=".9"/>
<rect x="412.5" y="47.5" width="5" height="8" rx="2.200" fill="url(#ggrey)" stroke="#b3b4c0" stroke-width=".9"/>
<rect x="420.5" y="36.5" width="5" height="8" rx="2.200" fill="url(#ggrey)" stroke="#b3b4c0" stroke-width=".9"/>
<rect x="420.5" y="47.5" width="5" height="8" rx="2.200" fill="url(#ggrey)" stroke="#b3b4c0" stroke-width=".9"/>
<rect x="428.5" y="36.5" width="5" height="8" rx="2.200" fill="url(#ggrey)" stroke="#b3b4c0" stroke-width=".9"/>
<rect x="428.5" y="47.5" width="5" height="8" rx="2.200" fill="url(#ggrey)" stroke="#b3b4c0" stroke-width=".9"/>
<path d="M442.5 46h5l-2.5 3z" fill="#b4b5c0"/>
<path d="M459 59 v-6 l12 -5 v-9 l6 -3 l8 4 v14 l-8 5z" fill="url(#ggrey)" stroke="#b3b4c0" stroke-width=".9"/><path d="M471 48 l6 3 M477 36 v23" fill="none" stroke="#b3b4c0" stroke-width=".9"/><path d="M463 53 l8 -9 v6z" fill="#b0b1bc"/>
<path d="M489 40 l9 -5 l17 6 v15 l-8 4 l-18 -6z" fill="url(#ggrey2)" stroke="#b3b4c0" stroke-width=".9"/><path d="M489 40 l18 6 l8 -5 M507 46 v14" fill="none" stroke="#b3b4c0" stroke-width=".9"/><path d="M507 46 l8 -5 v15 l-8 4z" fill="#a9aab4"/>
<path d="M522.500 40 l6 -4.500 h17.500 v17.500 l-6 5 h-17.500z" fill="#e9eaee" stroke="#b3b4c0" stroke-width=".9"/><rect x="522.500" y="40" width="17.500" height="18" fill="#b4b5be" stroke="#b3b4c0" stroke-width=".9"/><path d="M522.500 58 l5 -4.500 h12.500 v4.500z" fill="#d4d5dc"/><path d="M540 40 l6 -4.500 v17.500 l-6 5z" fill="#e4e4ea" stroke="#b3b4c0" stroke-width=".9"/>
<path d="M555 40.500 q0 -4.500 11 -4.500 q11 0 11 4.500 v13 q0 4.500 -11 4.500 q-11 0 -11 -4.500z" fill="#c6c7ce" stroke="#b3b4c0" stroke-width=".9"/><ellipse cx="566" cy="40.500" rx="11" ry="4.300" fill="#e9eaee" stroke="#b3b4c0" stroke-width=".9"/><path d="M559 48 h5 v6 h-5z M567 48 h6 v6 h-6z" fill="#e6e6ea" stroke="#a2a3ae" stroke-width=".8"/>
<path d="M587.500 49 v5 q0 4.500 11.500 4.500 q11.500 0 11.500 -4.500 v-5z" fill="#e6e6ea" stroke="#b3b4c0" stroke-width=".9"/><path d="M587.500 49 q0 -12 11.500 -12 q11.500 0 11.500 12 q0 3.500 -11.500 3.500 q-11.500 0 -11.500 -3.500z" fill="#b9bac3" stroke="#b3b4c0" stroke-width=".9"/>
<path d="M619 37 h6 v14 h-6z" fill="#e6e6ea" stroke="#b3b4c0" stroke-width=".9"/><path d="M630 35.500 h8 v14 h-8z" fill="#c4c5cc" stroke="#b3b4c0" stroke-width=".9"/><path d="M632 38 h4 v9 h-4z" fill="#e6e6ea"/><path d="M622 51 h19 v7 h-19z" fill="url(#ggrey)" stroke="#b3b4c0" stroke-width=".9"/>
<path d="M646.500 34 v27" stroke="#c9cad6" stroke-width="1"/>
<path d="M653 47.500 l8 -8 l9 9 l-8 8z" fill="url(#ggrey)" stroke="#b3b4c0" stroke-width=".9"/><path d="M652 38.500 l21 20" stroke="#9a9ba8" stroke-width=".9" stroke-dasharray="3 2"/><path d="M659 46 l5 5" stroke="#8e8f9c" stroke-width="1.200"/><path d="M671 36 v8 M667 40 h8 M668.200 37.200 l5.600 5.600 M673.800 37.200 l-5.600 5.600" stroke="#777885" stroke-width="1"/>
<path d="M683.5 45h5l-2.5 3z" fill="#b4b5c0"/>
<path d="M700.500 40 q3 -1 3.500 5 q.5 9 4.500 9 q3.500 0 5 -7 q1.500 -8 5 -7" fill="none" stroke="#9d9eaa" stroke-width="1.800" stroke-linecap="round"/>
<path d="M728.5 45h5l-2.5 3z" fill="#b4b5c0"/>
<path d="M739.500 34 v27" stroke="#c9cad6" stroke-width="1"/>
<path d="M749 36.500 l21 9.500" stroke="#b3b4c0" stroke-width="1"/><path d="M753 38.300 v-3 M757.500 40.300 v-4 M762 42.300 v-3 M766.500 44.400 v-4 M770 46 v5" stroke="#b3b4c0" stroke-width=".9"/><path d="M748 46 l14 7 l1.500 -3 l6 8 l-10 .5 l1.500 -3 l-14 -7z" fill="#b9bac4" stroke="#b3b4c0" stroke-width=".6"/>
<g transform="translate(5,98)"><path d="M0.4 2.700 L4.900 0.600 L9.400 1 L11.100 4.700 L15.600 9.300 L15.600 12.100 L10.300 15.800 L0.800 5.500 Z" fill="#f6d200" stroke="#000" stroke-width="1.300" stroke-linejoin="round"/><path d="M10.300 12.500 L15.600 9.300 L15.600 12.100 L10.300 15.800Z" fill="#d49a00"/><path d="M8.300 7.600 L11.200 6 L11.100 4.700 L9.400 1 L8.200 3.500Z" fill="#dca800"/><path d="M1 3 L4.900 1.200 L5.200 4.600 L8.200 7.700 L8.300 10.400 Z" fill="#ffee70"/><path d="M0.400 2.700 L10.300 12.500 L15.600 9.300 M10.300 12.500 V15.800 M4.900 0.600 L5.200 4.600 L8.300 7.700 L11.200 6.100 M8.300 7.700 V10.400 M5.200 4.600 L8.200 3.300 L9.400 1" fill="none" stroke="#000" stroke-width="1"/></g>
<rect x="33.500" y="102.500" width="14" height="12" fill="#f4f4f8" stroke="#6a6c80" stroke-width=".9"/><path d="M36 106h3M36 109h3M36 112h3" stroke="#d08a30" stroke-width="1.500"/><path d="M41 106h5M41 109h5M41 112h5" stroke="#8a8ca0" stroke-width="1"/><path d="M39 104 l6 -5 h6 l1 3 l-7 2 l-3 2z" fill="#f0b070" stroke="#8a5a20" stroke-width=".7"/>
<path d="M61.500 98 v17 M63.500 98 v17" stroke="#555" stroke-width="1"/><path d="M64 102.500h4M64 111h5" stroke="#222" stroke-width="1"/><rect x="67.500" y="98.500" width="8" height="7" rx="1.500" fill="#f5d800" stroke="#000" stroke-width="1.100"/><rect x="69.500" y="108" width="7.500" height="6.500" rx="1.500" fill="#f5d800" stroke="#000" stroke-width="1.100"/>
<circle cx="97" cy="106" r="5" fill="none" stroke="#c040d8" stroke-width="1.800"/><path d="M97 98v16M89 106h16" stroke="#c040d8" stroke-width="1.600"/>
<circle cx="125" cy="106" r="8" fill="#e8c020"/><path d="M125 106 L118 102.500 A8 8 0 0 1 127 98.200 Z" fill="#2a50d8"/><path d="M125 106 L127 98.200 A8 8 0 0 1 132.800 104 Z" fill="#181018"/><path d="M125 106 L132.800 104 A8 8 0 0 1 129 113 Z" fill="#e02818"/><path d="M125 106 L118 102.500 A8 8 0 0 0 120 112.300 Z" fill="#28b040"/><circle cx="125" cy="106" r="8" fill="none" stroke="#6a4a10" stroke-width=".6"/><circle cx="128" cy="102.500" r="2" fill="#e02818"/>
<path d="M821.500 88.500 l7 6.500" stroke="#3a78d8" stroke-width="3.600" stroke-linecap="round"/><circle cx="816.500" cy="83.500" r="6.800" fill="url(#glens)" stroke="#8a8c98" stroke-width="1.400"/><path d="M816.500 79.500 l2 2.500 h-4z M816.500 87.500 l2 -2.500 h-4z M812.500 83.500 l2.500 -2 v4z M820.500 83.500 l-2.500 -2 v4z" fill="#5a5c68"/>
<path d="M852 87 l7.500 7" stroke="#3a78d8" stroke-width="3.600" stroke-linecap="round"/><circle cx="847" cy="82" r="6.800" fill="url(#glens)" stroke="#8a8c98" stroke-width="1.400"/><rect x="839.500" y="75.500" width="10" height="10" fill="none" stroke="#33343c" stroke-width="1" stroke-dasharray="2 1.300"/>
<path d="M875 78.500 l13 12.500" stroke="#1c3f8c" stroke-width="9" stroke-linecap="round"/><path d="M875 78.500 l13 12.500" stroke="#4a94ec" stroke-width="6.600" stroke-linecap="round"/><path d="M876 77 l12 11.500" stroke="#a8d4ff" stroke-width="2" stroke-linecap="round"/><ellipse cx="889.500" cy="92.500" rx="5.600" ry="4" transform="rotate(-45 889.500 92.500)" fill="#d8ecff" stroke="#1c3f8c" stroke-width="1.200"/><path d="M897 78.500 h-9 v-2.500 l-4 3.500 l4 3.500 v-2.500 h9z" fill="#2348b0"/>
<path d="M906 79 q4 -4 9 -2 v18 q-5 -2 -9 2z" fill="#b9bac2" stroke="#a2a3ae" stroke-width=".8"/><path d="M915 77 q5 -2 9 2 v18 q-4 -4 -9 -2z" fill="#c9cad0" stroke="#a2a3ae" stroke-width=".8"/><path d="M915 80 l4 1 v14 l-4 -1z" fill="#a4a5ae"/>
<path d="M937 82.500 l7 -7 h15 v14.500 l-7 7 h-15z" fill="#fff" stroke="#2a2c38" stroke-width="1"/><path d="M937 82.500 h15 v14.500 h-15z" fill="url(#gblue)" stroke="#2a2c38" stroke-width="1"/><path d="M952 82.500 l7 -7" stroke="#2a2c38" stroke-width="1"/><path d="M948.500 76 v4.500 M946.500 78.500 l2 2.500 l2 -2.500z" stroke="#e02020" stroke-width="1.500" fill="#e02020"/><path d="M958 88 h-4 M955.500 86 l-2.500 2 l2.500 2z" stroke="#e02020" stroke-width="1.500" fill="#e02020"/>
<path d="M962.500 85.500 h5 l-2.500 3.500z" fill="#3a3c5a"/>
<path d="M978 81.500 l7 -6 h18 v15 l-7 6.500 h-18z" fill="#fff" stroke="#2a2c38" stroke-width="1"/><path d="M978 81.500 h18 v15.500 h-18z" fill="#fff" stroke="#2a2c38" stroke-width="1"/><path d="M987 81.500 h9 v15.500 h-9z" fill="#4a88e0"/><path d="M996 81.500 l7 -6 v15 l-7 6.500z" fill="#2a5cb8" stroke="#2a2c38" stroke-width="1"/><path d="M978 81.500 l7 -6 h18 l-7 6z" fill="#e8f0ff" stroke="#2a2c38" stroke-width="1"/>
<path d="M1006 85.500 h5 l-2.500 3.500z" fill="#3a3c5a"/>
<circle cx="1024.500" cy="89" r="4.300" fill="#e4e6f0" fill-opacity=".6" stroke="#7a7c8c" stroke-width="1.300"/><circle cx="1034.500" cy="91" r="4.300" fill="#e4e6f0" fill-opacity=".6" stroke="#7a7c8c" stroke-width="1.300"/><path d="M1021.500 86 q2 -9 6 -7 M1038 88.500 q4 -7 5.500 -4 M1028.500 89.500 q1.500 -1.500 2.500 .3" fill="none" stroke="#7a7c8c" stroke-width="1.200"/>
</svg>
<div id="swS" class="abs">Solid<b>Works</b></div>
<div id="dlg" class="abs"></div>
<div class="abs" style="left:1034px;top:411px;width:5px;height:399px;background:linear-gradient(#a0b1d8 0,#8497c0 27%,#8598c1 52%,#9db0d8 77%,#aabde3 97%)"></div>
<div class="abs" style="left:118px;top:811px;width:921px;height:4px;background:linear-gradient(90deg,#c9d5f2 0,#c4d0ee 174px,#a4b6da 187px,#abbde0 220px,#abbde0 880px,#8f9fc6 100%)"></div>
<div id="dlgtitle" class="abs">Уравнения - Кирпич красный</div>
<div id="dlgclient" class="abs"></div>
<div id="list" class="abs"></div>
<div id="lhead" class="abs"></div>
<div class="hsep" style="left:196px"></div>
<div class="hsep" style="left:709px"></div>
<div class="hsep" style="left:796px"></div>
<div class="hsep" style="left:884px"></div>
<div class="htx" style="left:143px">Актив...</div>
<div class="htx" style="left:204px">Уравнение</div>
<div class="htx" style="right:256px">Равняется</div>
<div class="htx" style="right:169px">Заметка</div>
<div class="r" style="top:444px"><div class="cb"><i></i><svg width="9" height="9" viewBox="0 0 9 9"><path d="M1.2 3.6 L3.4 7.6 L7.8 0.8" fill="none" stroke="#31479b" stroke-width="1.9"/></svg></div><span class="n">1</span><span class="e">&quot;Толщина шва&quot;= 5</span><svg class="ck" width="17" height="16" viewBox="0 0 17 16"><path d="M2 4.800 L3.400 12.600 L14.800 2.200" fill="none" stroke="#0f6e10" stroke-width="3.800" stroke-linejoin="round" stroke-linecap="round"/><path d="M2 4.800 L3.400 12.600 L14.800 2.200" fill="none" stroke="#46c836" stroke-width="1.700" stroke-linejoin="round" stroke-linecap="round"/></svg><span class="v">5</span></div>
<div class="r" style="top:461px"><div class="cb"><i></i><svg width="9" height="9" viewBox="0 0 9 9"><path d="M1.2 3.6 L3.4 7.6 L7.8 0.8" fill="none" stroke="#31479b" stroke-width="1.9"/></svg></div><span class="n">2</span><span class="e">&quot;Длина кирпича&quot;= 255</span><svg class="ck" width="17" height="16" viewBox="0 0 17 16"><path d="M2 4.800 L3.400 12.600 L14.800 2.200" fill="none" stroke="#0f6e10" stroke-width="3.800" stroke-linejoin="round" stroke-linecap="round"/><path d="M2 4.800 L3.400 12.600 L14.800 2.200" fill="none" stroke="#46c836" stroke-width="1.700" stroke-linejoin="round" stroke-linecap="round"/></svg><span class="v">255</span></div>
<div class="r" style="top:478px"><div class="cb"><i></i><svg width="9" height="9" viewBox="0 0 9 9"><path d="M1.2 3.6 L3.4 7.6 L7.8 0.8" fill="none" stroke="#31479b" stroke-width="1.9"/></svg></div><span class="n">3</span><span class="e">&quot;Восьмая доля&quot;= (&quot;Длина кирпича&quot;-7*&quot;Толщина шва&quot;)/8</span><svg class="ck" width="17" height="16" viewBox="0 0 17 16"><path d="M2 4.800 L3.400 12.600 L14.800 2.200" fill="none" stroke="#0f6e10" stroke-width="3.800" stroke-linejoin="round" stroke-linecap="round"/><path d="M2 4.800 L3.400 12.600 L14.800 2.200" fill="none" stroke="#46c836" stroke-width="1.700" stroke-linejoin="round" stroke-linecap="round"/></svg><span class="v">27.5</span></div>
<div class="r" style="top:495px"><div class="cb"><i></i><svg width="9" height="9" viewBox="0 0 9 9"><path d="M1.2 3.6 L3.4 7.6 L7.8 0.8" fill="none" stroke="#31479b" stroke-width="1.9"/></svg></div><span class="n">4</span><span class="e">&quot;Ширина кирпича&quot;=( &quot;Длина кирпича&quot;-&quot;Толщина шва&quot;) / 2</span><svg class="ck" width="17" height="16" viewBox="0 0 17 16"><path d="M2 4.800 L3.400 12.600 L14.800 2.200" fill="none" stroke="#0f6e10" stroke-width="3.800" stroke-linejoin="round" stroke-linecap="round"/><path d="M2 4.800 L3.400 12.600 L14.800 2.200" fill="none" stroke="#46c836" stroke-width="1.700" stroke-linejoin="round" stroke-linecap="round"/></svg><span class="v">125</span></div>
<div class="r" style="top:512px"><div class="cb"><i></i><svg width="9" height="9" viewBox="0 0 9 9"><path d="M1.2 3.6 L3.4 7.6 L7.8 0.8" fill="none" stroke="#31479b" stroke-width="1.9"/></svg></div><span class="n">5</span><span class="e">&quot;Высота кирпича&quot;= 65</span><svg class="ck" width="17" height="16" viewBox="0 0 17 16"><path d="M2 4.800 L3.400 12.600 L14.800 2.200" fill="none" stroke="#0f6e10" stroke-width="3.800" stroke-linejoin="round" stroke-linecap="round"/><path d="M2 4.800 L3.400 12.600 L14.800 2.200" fill="none" stroke="#46c836" stroke-width="1.700" stroke-linejoin="round" stroke-linecap="round"/></svg><span class="v">65</span></div>
<div class="r" style="top:529px"><div class="cb"><i></i><svg width="9" height="9" viewBox="0 0 9 9"><path d="M1.2 3.6 L3.4 7.6 L7.8 0.8" fill="none" stroke="#31479b" stroke-width="1.9"/></svg></div><span class="n">6</span><span class="e">&quot;D2@Эскиз1&quot; = &quot;Длина кирпича&quot;</span><svg class="ck" width="17" height="16" viewBox="0 0 17 16"><path d="M2 4.800 L3.400 12.600 L14.800 2.200" fill="none" stroke="#0f6e10" stroke-width="3.800" stroke-linejoin="round" stroke-linecap="round"/><path d="M2 4.800 L3.400 12.600 L14.800 2.200" fill="none" stroke="#46c836" stroke-width="1.700" stroke-linejoin="round" stroke-linecap="round"/></svg><span class="v">255мм</span><span class="m">Целый</span></div>
<div class="r" style="top:546px"><div class="cb"><i></i><svg width="9" height="9" viewBox="0 0 9 9"><path d="M1.2 3.6 L3.4 7.6 L7.8 0.8" fill="none" stroke="#31479b" stroke-width="1.9"/></svg></div><span class="n">7</span><span class="e">&quot;D1@Эскиз1&quot; = &quot;Ширина кирпича&quot;</span><svg class="ck" width="17" height="16" viewBox="0 0 17 16"><path d="M2 4.800 L3.400 12.600 L14.800 2.200" fill="none" stroke="#0f6e10" stroke-width="3.800" stroke-linejoin="round" stroke-linecap="round"/><path d="M2 4.800 L3.400 12.600 L14.800 2.200" fill="none" stroke="#46c836" stroke-width="1.700" stroke-linejoin="round" stroke-linecap="round"/></svg><span class="v">125мм</span></div>
<div class="r" style="top:563px"><div class="cb"><i></i><svg width="9" height="9" viewBox="0 0 9 9"><path d="M1.2 3.6 L3.4 7.6 L7.8 0.8" fill="none" stroke="#31479b" stroke-width="1.9"/></svg></div><span class="n">8</span><span class="e">&quot;D1@Бобышка-Вытянуть1&quot; = &quot;Высота кирпича&quot;</span><svg class="ck" width="17" height="16" viewBox="0 0 17 16"><path d="M2 4.800 L3.400 12.600 L14.800 2.200" fill="none" stroke="#0f6e10" stroke-width="3.800" stroke-linejoin="round" stroke-linecap="round"/><path d="M2 4.800 L3.400 12.600 L14.800 2.200" fill="none" stroke="#46c836" stroke-width="1.700" stroke-linejoin="round" stroke-linecap="round"/></svg><span class="v">65мм</span></div>
<div class="r" style="top:580px"><div class="cb"><i></i><svg width="9" height="9" viewBox="0 0 9 9"><path d="M1.2 3.6 L3.4 7.6 L7.8 0.8" fill="none" stroke="#31479b" stroke-width="1.9"/></svg></div><span class="n">9</span><span class="e">&quot;D1@Эскиз2&quot; = &quot;Толщина шва&quot;</span><svg class="ck" width="17" height="16" viewBox="0 0 17 16"><path d="M2 4.800 L3.400 12.600 L14.800 2.200" fill="none" stroke="#0f6e10" stroke-width="3.800" stroke-linejoin="round" stroke-linecap="round"/><path d="M2 4.800 L3.400 12.600 L14.800 2.200" fill="none" stroke="#46c836" stroke-width="1.700" stroke-linejoin="round" stroke-linecap="round"/></svg><span class="v">5мм</span></div>
<div class="r" style="top:597px"><div class="cb"><i></i></div><span class="n">10</span><span class="e">&quot;D2@Эскиз1&quot; = &quot;Восьмая доля&quot; * 4 + 3 * &quot;Толщина шва&quot;</span><span class="v">Погашен</span><span class="m">Половинка </span></div>
<div class="r" style="top:614px"><div class="cb"><i></i></div><span class="n">11</span><span class="e">&quot;D2@Эскиз1&quot;=&quot;Восьмая доля&quot; * 2  +  &quot;Толщина шва&quot;</span><span class="v">Погашен</span><span class="m">Четвертинка</span></div>
<div class="r" style="top:631px"><div class="cb"><i></i></div><span class="n">12</span><span class="e">&quot;D2@Эскиз1&quot;= &quot;Восьмая доля&quot; * 6   +   5 * &quot;Толщина шва&quot;</span><span class="v">Погашен</span><span class="m">Три четверти</span></div>
<div class="r" style="top:648px"><div class="cb"><i></i></div><span class="n">13</span><span class="e">&quot;D2@Эскиз1&quot;=&quot;Восьмая доля&quot;</span><span class="v">Погашен</span><span class="m">Восьмая</span></div>
<div class="r" style="top:665px"><div class="cb"><i></i></div><span class="n">14</span><span class="e">&quot;D2@Эскиз1&quot;=&quot;Восьмая доля&quot; * 3  +  2 * &quot;Толщина шва&quot;</span><span class="v">Погашен</span><span class="m">Три восьмых</span></div>
<div class="r" style="top:682px"><div class="cb"><i></i></div><span class="n">15</span><span class="e">&quot;D2@Эскиз1&quot; = &quot;Восьмая доля&quot; * 5 + 4 * &quot;Толщина шва&quot;</span><span class="v">Погашен</span><span class="m">Пять восьмых</span></div>
<div class="r" style="top:699px"><div class="cb"><i></i></div><span class="n">16</span><span class="e">&quot;D2@Эскиз1&quot; = &quot;Восьмая доля&quot; * 7  +  6 * &quot;Толщина шва&quot;</span><span class="v">Погашен</span><span class="m">Семь восьмых</span></div>
<div class="r" style="top:716px"><div class="cb"><i></i></div><span class="n">17</span><span class="e">&quot;D1@Эскиз1&quot;=(&quot;Ширина кирпича&quot;-&quot;Толщина шва&quot;) / 2</span><span class="v">Погашен</span></div>
<div class="r" style="top:733px"><div class="cb"><i></i><svg width="9" height="9" viewBox="0 0 9 9"><path d="M1.2 3.6 L3.4 7.6 L7.8 0.8" fill="none" stroke="#31479b" stroke-width="1.9"/></svg></div><span class="n">18</span><span class="e">&quot;D19@Бобышка-Вытянуть1&quot; = &quot;Толщина шва&quot;</span><svg class="ck" width="17" height="16" viewBox="0 0 17 16"><path d="M2 4.800 L3.400 12.600 L14.800 2.200" fill="none" stroke="#0f6e10" stroke-width="3.800" stroke-linejoin="round" stroke-linecap="round"/><path d="M2 4.800 L3.400 12.600 L14.800 2.200" fill="none" stroke="#46c836" stroke-width="1.700" stroke-linejoin="round" stroke-linecap="round"/></svg><span class="v">5мм</span></div>
<div class="btn" style="left:900px;top:421px;width:120px">Добавить...</div>
<div class="btn" style="left:900px;top:452px;width:120px">Редактировать</div>
<div class="btn" style="left:900px;top:483px;width:120px">Редактировать все...</div>
<div class="btn" style="left:900px;top:514px;width:120px">Удалить</div>
<div class="btn" style="left:900px;top:545px;width:120px">Конфигурации...</div>
<div class="btn" style="left:900px;top:576px;width:120px">Импорт...</div>
<div class="btn" style="left:900px;top:607px;width:120px">Экспорт...</div>
<div class="btn" style="left:596px;top:774px;width:120px">OK</div>
<div class="btn" style="left:742px;top:774px;width:120px">Отмена</div>
<div class="btn" style="left:888px;top:774px;width:120px">Справка</div>
<div class="abs" style="left:127px;top:779px;white-space:nowrap">Угловые единицы:</div>
<div class="btn" style="left:246px;top:774px;width:68px;height:20px"></div>
<div class="abs" style="left:301px;top:782px;width:0;height:0;border:3.5px solid transparent;border-top:4px solid #000;border-bottom:none"></div>
<div class="abs" style="left:346px;top:775px;width:239px;height:19px;background:#f4f4f4;border:1px solid #d6d6d6;border-top-color:#c4c4c4"></div>
<svg class="abs" style="left:326px;top:777px" width="14" height="17" viewBox="0 0 14 17"><rect x="1.5" y="3.5" width="11" height="13" fill="#eef1fa" stroke="#7f8fc0"/><rect x="1.5" y="1.5" width="11" height="3" fill="#e8a23a" stroke="#c07820" stroke-width=".6"/><path d="M3.5 7.5h7M3.5 9.5h7M3.5 11.5h7M3.5 13.5h7" stroke="#8a9acb" stroke-width="1"/></svg>
<svg class="abs" style="left:1017px;top:793px" width="17" height="17" viewBox="0 0 17 17"><path d="M1 16L16 1M5 16L16 5M9 16L16 9M13 16L16 13" stroke="#2f3cc0" stroke-width="1.5" stroke-dasharray="1.5 0.6"/></svg>
<svg id="annot" class="abs" width="1046" height="825" viewBox="0 0 1046 825" fill="none" stroke="#f5151f" stroke-width="2.3" stroke-linecap="round" stroke-linejoin="round">
<path d="M265.0 187.0C266.5 187.4 270.9 188.9 274.0 189.5C277.1 190.1 279.7 190.5 283.7 190.4C287.7 190.3 293.2 190.4 298.0 189.0C302.8 187.6 308.1 184.4 312.4 181.8C316.7 179.2 320.5 176.5 323.8 173.2C327.1 169.8 329.5 166.0 332.4 161.7C335.3 157.4 338.1 151.7 341.0 147.4C343.9 143.1 346.3 139.2 349.6 135.9C352.9 132.6 356.7 129.8 361.0 127.3C365.3 124.8 370.1 122.4 375.4 121.0C380.7 119.6 387.4 119.6 392.7 118.7C398.0 117.8 402.2 117.0 407.0 115.8C411.8 114.6 416.5 113.0 421.3 111.5C426.1 110.0 431.4 107.9 435.7 106.6C440.0 105.3 442.7 104.3 447.0 103.8C451.3 103.3 455.3 103.5 461.5 103.5C467.7 103.5 478.2 103.9 484.4 103.5C490.6 103.1 494.0 101.0 498.8 100.9C503.6 100.8 508.7 102.0 513.0 102.9C517.3 103.9 520.9 105.5 524.6 106.6C528.4 107.7 533.7 109.0 535.5 109.5"/>
<path d="M286.0 181.0C284.3 181.4 279.4 182.5 276.0 183.5C272.6 184.5 267.2 186.2 265.5 186.8"/>
<path d="M265.5 187.0C267.3 188.0 273.1 190.9 276.5 193.0C279.9 195.1 284.4 198.7 286.0 199.8"/>
<path d="M851.5 259.1C851.0 261.0 850.0 266.7 848.8 270.3C847.5 273.9 845.5 277.0 844.0 281.0C842.5 285.0 841.0 289.0 840.0 294.3C839.0 299.6 838.8 306.8 838.1 313.0C837.4 319.2 837.2 325.5 836.0 331.7C834.8 337.9 832.2 344.1 830.7 350.3C829.2 356.5 827.8 363.2 826.7 369.0C825.6 374.8 825.1 379.7 824.0 385.0C822.9 390.3 822.0 395.7 820.0 401.0C818.0 406.3 814.0 412.9 812.0 417.0C810.0 421.1 808.7 424.1 808.0 425.5"/>
<path d="M811.5 395.7C811.3 398.1 811.1 405.0 810.5 410.0C809.9 415.0 808.4 422.9 808.0 425.5"/>
<path d="M808.0 425.5C810.0 423.4 816.3 416.7 820.0 413.0C823.7 409.3 828.7 404.2 830.1 403.1C831.5 402.0 828.8 405.9 828.5 406.5"/>
<path d="M848.8 270.3C850.2 271.6 854.8 275.2 857.3 278.3C859.8 281.4 863.2 284.6 864.0 289.0C864.8 293.4 863.4 299.7 862.1 305.0C860.8 310.3 857.8 315.7 856.0 321.0C854.2 326.3 852.4 331.7 851.5 337.0C850.6 342.3 849.7 347.7 850.7 353.0C851.7 358.3 855.1 363.7 857.3 369.0C859.5 374.3 862.6 379.7 864.0 385.0C865.4 390.3 865.9 394.8 865.9 401.0C865.9 407.2 864.8 415.2 864.0 422.3C863.2 429.4 862.2 438.1 861.3 443.7C860.4 449.3 859.4 450.8 858.7 456.0C858.0 461.2 857.8 468.5 857.3 474.7C856.8 480.9 856.4 487.1 856.0 493.3C855.6 499.5 855.4 506.2 854.7 512.0C854.0 517.8 853.0 522.2 852.0 528.0C851.0 533.8 849.7 540.0 848.8 546.7C847.9 553.4 847.3 560.9 846.7 568.0C846.1 575.1 846.0 582.2 845.3 589.3C844.6 596.4 843.8 604.5 842.7 610.7C841.6 616.9 840.2 621.1 838.7 626.7C837.2 632.3 835.5 639.0 833.7 644.3C831.9 649.6 830.1 653.4 828.0 658.7C825.9 664.0 823.2 670.2 820.8 675.9C818.4 681.6 816.2 686.9 813.6 693.1C811.0 699.3 807.6 707.5 805.0 713.2C802.4 718.9 800.0 724.2 797.9 727.5C795.8 730.8 793.1 731.8 792.1 732.7"/>
<path d="M792.1 732.7C794.1 731.6 800.2 728.1 804.0 726.0C807.8 723.9 813.2 721.2 815.0 720.3"/>
<path d="M792.5 732.5C793.4 730.8 796.5 725.2 798.0 722.0C799.5 718.8 800.9 714.9 801.5 713.5"/>
<path d="M138.7 600.0C136.5 600.9 129.8 602.8 125.3 605.3C120.8 607.8 116.0 611.1 112.0 614.7C108.0 618.3 104.2 622.7 101.3 626.7C98.4 630.7 96.1 634.5 94.7 638.7C93.3 642.9 92.8 647.6 92.8 652.0C92.8 656.4 93.5 661.3 94.7 665.3C95.9 669.3 98.0 672.4 100.0 676.0C102.0 679.6 104.2 682.7 106.7 686.7C109.2 690.7 112.0 695.8 114.7 700.0C117.4 704.2 119.8 708.5 122.7 712.0C125.6 715.5 129.1 718.8 132.0 721.3C134.9 723.8 138.7 725.8 140.0 726.7"/>
<path d="M17.3 689.9C17.8 687.1 18.9 678.3 20.0 673.3C21.1 668.3 22.4 665.3 24.0 660.0C25.6 654.7 27.3 647.5 29.3 641.3C31.3 635.1 33.5 628.2 36.0 622.7C38.5 617.2 41.1 611.6 44.0 608.0C46.9 604.4 50.0 602.3 53.3 600.8C56.6 599.3 60.4 598.7 64.0 599.2C67.6 599.7 71.4 601.6 74.7 604.0C78.0 606.4 81.1 610.2 84.0 613.3C86.9 616.4 89.5 620.0 92.0 622.7C94.5 625.4 98.0 628.2 99.2 629.3"/>
<path d="M65.3 618.7C67.8 619.2 74.3 620.2 80.0 622.0C85.7 623.8 96.0 628.1 99.2 629.3"/>
<path d="M99.2 629.3C97.8 627.3 92.6 620.6 90.7 617.3C88.8 614.0 88.5 610.6 88.0 609.3"/>
<path d="M140.0 732.0C143.3 732.4 152.2 733.6 160.0 734.1C167.8 734.6 180.0 734.7 186.7 734.7C193.4 734.7 191.1 734.2 200.0 734.2C208.9 734.2 226.8 734.9 240.2 735.0C253.6 735.1 266.9 735.0 280.3 735.0C293.7 735.0 307.1 735.1 320.5 735.0C333.9 734.9 347.2 734.5 360.6 734.2C374.0 733.9 387.4 733.5 400.8 733.4C414.2 733.3 431.0 733.6 441.0 733.4C451.0 733.2 454.3 732.7 461.0 732.2C467.7 731.7 475.1 730.7 481.1 730.2C487.1 729.7 490.5 729.1 497.2 729.0C503.9 728.9 513.3 728.9 521.3 729.4C529.3 729.9 538.7 731.1 545.4 732.2C552.1 733.3 555.4 734.9 561.4 736.2C567.4 737.5 574.8 739.5 581.5 740.2C588.2 740.9 595.6 740.2 601.6 740.4C607.6 740.6 612.2 741.1 617.2 741.3C622.2 741.5 627.2 742.4 631.5 741.8C635.8 741.2 638.7 738.9 643.0 737.5C647.3 736.1 650.2 734.2 657.4 733.2C664.6 732.2 676.5 732.0 686.0 731.8C695.5 731.6 707.1 732.0 714.7 731.8C722.4 731.6 724.2 730.5 731.9 730.4C739.5 730.2 752.0 730.5 760.6 730.9C769.2 731.3 777.3 731.8 783.5 732.7C789.7 733.6 792.9 734.6 797.9 736.1C802.9 737.6 810.8 740.5 813.6 741.8C816.4 743.1 815.7 742.7 814.5 744.1C813.3 745.5 809.3 747.4 806.5 750.4C803.7 753.4 800.8 758.8 797.9 761.9C795.0 765.0 793.1 767.2 789.3 769.1C785.5 771.0 779.2 772.9 774.9 773.4C770.6 773.9 767.8 773.2 763.5 772.0C759.2 770.8 754.4 767.8 749.1 766.2C743.8 764.6 738.6 763.3 731.9 762.5C725.2 761.7 716.6 761.5 709.0 761.3C701.4 761.1 694.6 761.1 686.0 761.3C677.4 761.5 666.9 762.0 657.4 762.5C647.9 763.0 638.0 763.7 628.7 764.2C619.4 764.7 612.8 765.0 601.6 765.5C590.4 766.0 574.8 766.6 561.4 767.1C548.0 767.6 534.7 767.8 521.3 768.3C507.9 768.8 493.2 770.1 481.1 770.3C469.1 770.5 458.4 770.3 449.0 769.5C439.6 768.7 431.6 766.0 424.9 765.5C418.2 765.0 413.5 765.5 408.8 766.3C404.1 767.1 402.2 768.6 396.8 770.3C391.4 772.0 384.1 774.8 376.7 776.3C369.3 777.8 362.0 778.3 352.6 779.2C343.2 780.1 329.3 781.2 320.5 781.6C311.7 782.0 305.2 781.8 300.0 781.8C294.8 781.8 291.8 781.9 289.5 781.4C287.2 780.9 287.1 780.0 286.0 779.0C284.9 778.0 284.3 776.1 283.0 775.3C281.7 774.5 283.8 774.4 278.0 774.2C272.2 774.0 257.2 774.4 248.2 774.3C239.2 774.2 230.0 774.5 224.0 773.5C218.0 772.5 215.6 769.7 212.0 768.3C208.4 766.9 207.8 766.0 202.7 765.3C197.6 764.6 188.4 764.1 181.3 764.0C174.2 763.9 166.2 764.0 160.0 764.5C153.8 765.0 148.7 766.3 144.0 766.7C139.3 767.1 134.4 767.2 132.0 766.7C129.6 766.2 129.1 764.9 129.3 764.0C129.5 763.1 133.3 762.1 133.3 761.3C133.3 760.5 130.6 760.5 129.3 759.2C128.0 757.9 125.7 755.6 125.3 753.3C124.9 751.0 125.6 748.0 126.7 745.3C127.8 742.6 129.8 739.5 132.0 737.3C134.2 735.1 138.7 732.9 140.0 732.0"/>
<path d="M136.0 422.7C139.8 421.3 144.4 421.0 149.3 420.8C154.2 420.6 160.8 421.2 165.3 421.3C169.8 421.4 172.7 422.0 176.5 421.4C180.3 420.8 181.6 418.4 188.0 417.5C194.4 416.6 203.9 416.2 214.7 416.0C225.5 415.8 240.2 416.2 253.0 416.0C265.8 415.8 281.0 415.7 291.2 414.9C301.4 414.1 307.1 412.1 314.1 411.0C321.1 409.9 327.6 408.4 333.3 408.4C339.1 408.4 343.5 409.3 348.6 411.0C353.7 412.7 358.2 416.3 363.9 418.7C369.6 421.1 376.6 424.2 383.0 425.2C389.4 426.1 396.4 425.5 402.1 424.4C407.8 423.3 412.3 420.0 417.4 418.7C422.5 417.4 426.3 417.0 432.7 416.8C439.1 416.6 447.3 417.2 455.6 417.5C463.9 417.8 474.5 417.9 482.4 418.5C490.3 419.1 496.4 420.6 503.0 421.0C509.6 421.4 515.6 421.8 522.0 421.0C528.4 420.2 534.2 417.0 541.2 416.0C548.2 415.0 556.5 414.6 564.1 414.9C571.7 415.2 579.4 416.7 587.0 418.0C594.6 419.3 602.3 421.6 610.0 422.5C617.7 423.4 625.3 423.9 633.0 423.7C640.7 423.4 648.4 421.8 656.0 421.0C663.6 420.2 671.3 419.8 678.9 418.7C686.5 417.6 694.2 415.2 701.8 414.1C709.4 413.0 717.1 412.2 724.7 412.2C732.4 412.2 740.1 413.0 747.7 414.1C755.4 415.2 763.6 417.4 770.6 418.7C777.6 420.0 783.6 421.0 789.7 421.8C795.8 422.6 802.5 422.1 807.0 423.7C811.5 425.3 813.7 427.4 816.5 431.3C819.3 435.2 822.2 441.1 824.0 447.0C825.8 452.9 826.8 459.0 827.5 466.7C828.2 474.4 828.4 484.4 828.5 493.3C828.6 502.2 828.5 512.0 828.0 520.0C827.5 528.0 826.4 535.1 825.3 541.3C824.2 547.5 823.1 552.0 821.3 557.3C819.5 562.6 816.9 568.4 814.7 573.3C812.5 578.2 810.0 582.9 808.0 586.7C806.0 590.5 805.6 593.8 802.7 596.0C799.8 598.2 796.7 599.0 790.7 600.0C784.7 601.0 776.0 601.3 766.7 602.1C757.4 602.9 743.2 604.3 734.7 604.8C726.2 605.3 721.8 605.4 716.0 605.3C710.2 605.2 709.3 604.5 700.0 604.0C690.7 603.5 673.3 602.9 660.0 602.5C646.7 602.1 633.3 601.6 620.0 601.5C606.7 601.4 593.3 602.2 580.0 602.0C566.7 601.8 555.0 600.8 540.0 600.5C525.0 600.2 507.7 600.1 490.0 600.2C472.3 600.3 449.7 601.6 434.0 601.3C418.3 601.0 408.7 598.0 396.0 598.2C383.3 598.5 370.5 602.3 357.7 602.8C344.9 603.3 332.1 601.3 319.4 601.3C306.6 601.3 293.9 603.0 281.2 602.8C268.5 602.6 255.8 600.5 243.0 600.2C230.2 600.0 215.9 601.4 204.7 601.3C193.5 601.2 184.3 600.1 176.0 599.5C167.7 598.9 160.9 598.8 154.7 597.9C148.5 597.0 143.4 595.8 138.7 594.1C134.0 592.5 130.0 590.6 126.7 588.0C123.4 585.4 120.9 582.5 118.7 578.7C116.5 574.9 114.8 570.2 113.3 565.3C111.8 560.4 111.0 554.6 109.9 549.3C108.8 544.0 107.5 538.6 106.7 533.3C105.9 528.0 105.4 522.6 105.3 517.3C105.2 512.0 105.4 506.6 106.1 501.3C106.8 496.0 108.1 490.2 109.3 485.3C110.5 480.4 112.2 476.9 113.3 472.0C114.4 467.1 114.9 461.3 116.0 456.0C117.1 450.7 118.2 444.4 120.0 440.0C121.8 435.6 124.0 432.2 126.7 429.3C129.4 426.4 132.2 424.1 136.0 422.7Z"/>
</svg>
<div class="rt" style="left:549.5px;top:97px">текущая конфигурация - полный кирпич</div>
<div class="rt" style="left:808px;top:225px">активные уравнения</div>
<div class="rt" style="left:13px;top:703px">погашенные</div>
<div class="rt" style="left:13px;top:725px">уравнения</div>
</body>
</html>
